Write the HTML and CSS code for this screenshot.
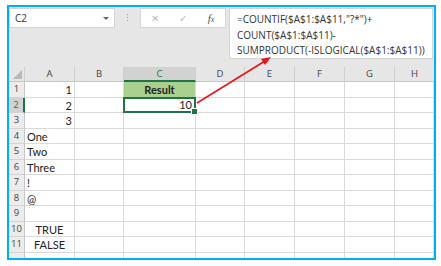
FILE: index.html
```html
<!DOCTYPE html>
<html>

<head>
    <title>Excel</title>
    <link rel="stylesheet" href="styles.css">
</head>

<body>
    <div class="frame">
        <div class="bar">
            <div class="namebox">C2<span class="drop"></span></div>
            <div class="dots"><i></i><i></i><i></i></div>
            <div class="buttons">
                <span class="btn">&#x2715;</span>
                <span class="btn">&#x2713;</span>
                <span class="btn fx">f<small>x</small></span>
            </div>
            <div class="formula">=COUNTIF($A$1:$A$11,"?*")+<br>COUNT($A$1:$A$11)-<br>SUMPRODUCT(-ISLOGICAL($A$1:$A$11))</div>
        </div>

        <div class="sheet">
            <div class="hd corner"><span class="tri"></span></div>
            <div class="hd">A</div>
            <div class="hd">B</div>
            <div class="hd sel">C</div>
            <div class="hd">D</div>
            <div class="hd">E</div>
            <div class="hd">F</div>
            <div class="hd">G</div>
            <div class="hd last">H</div>

            <div class="rn">1</div>
            <div class="c num">1</div><div class="c"></div><div class="c result">Result</div><div class="c"></div><div class="c"></div><div class="c"></div><div class="c"></div><div class="c"></div>

            <div class="rn sel">2</div>
            <div class="c num">2</div><div class="c"></div><div class="c num active">10<span class="handle"></span></div><div class="c"></div><div class="c"></div><div class="c"></div><div class="c"></div><div class="c"></div>

            <div class="rn">3</div>
            <div class="c num">3</div><div class="c"></div><div class="c"></div><div class="c"></div><div class="c"></div><div class="c"></div><div class="c"></div><div class="c"></div>

            <div class="rn">4</div>
            <div class="c">One</div><div class="c"></div><div class="c"></div><div class="c"></div><div class="c"></div><div class="c"></div><div class="c"></div><div class="c"></div>

            <div class="rn">5</div>
            <div class="c">Two</div><div class="c"></div><div class="c"></div><div class="c"></div><div class="c"></div><div class="c"></div><div class="c"></div><div class="c"></div>

            <div class="rn">6</div>
            <div class="c">Three</div><div class="c"></div><div class="c"></div><div class="c"></div><div class="c"></div><div class="c"></div><div class="c"></div><div class="c"></div>

            <div class="rn">7</div>
            <div class="c">!</div><div class="c"></div><div class="c"></div><div class="c"></div><div class="c"></div><div class="c"></div><div class="c"></div><div class="c"></div>

            <div class="rn">8</div>
            <div class="c">@</div><div class="c"></div><div class="c"></div><div class="c"></div><div class="c"></div><div class="c"></div><div class="c"></div><div class="c"></div>

            <div class="rn">9</div>
            <div class="c"></div><div class="c"></div><div class="c"></div><div class="c"></div><div class="c"></div><div class="c"></div><div class="c"></div><div class="c"></div>

            <div class="rn">10</div>
            <div class="c bool">TRUE</div><div class="c"></div><div class="c"></div><div class="c"></div><div class="c"></div><div class="c"></div><div class="c"></div><div class="c"></div>

            <div class="rn">11</div>
            <div class="c bool">FALSE</div><div class="c"></div><div class="c"></div><div class="c"></div><div class="c"></div><div class="c"></div><div class="c"></div><div class="c"></div>

            <div class="rn"></div>
            <div class="c"></div><div class="c"></div><div class="c"></div><div class="c"></div><div class="c"></div><div class="c"></div><div class="c"></div><div class="c"></div>
        </div>

        <!-- red pointer from the cell to the formula -->
        <svg class="arrow" width="425" height="251" viewBox="0 0 425 251">
            <line x1="188" y1="96" x2="256" y2="54" stroke="#e8141c" stroke-width="1.6"/>
            <polygon points="262,50 252,52 256,58" fill="#e8141c"/>
        </svg>
    </div>
</body>

</html>
```

FILE: styles.css
```css
body {
    margin: 0;
    background: #fff;
}

.frame {
    position: relative;
    width: 425px;
    height: 251px;
    margin: 5px 0 0 7px;
    border: 2px solid #00b0f0;
    overflow: hidden;
    background: #fff;
}

.bar {
    display: flex;
    align-items: flex-start;
    height: 60px;
    padding-top: 1px;
    box-sizing: border-box;
    background: #e6e6e6;
    font-family: "Open Sans", "Noto Sans", sans-serif;
}

.namebox {
    position: relative;
    width: 106px;
    height: 20px;
    box-sizing: border-box;
    border: 1px solid #d4d4d4;
    background: #fff;
    padding-left: 5px;
    font-size: 10px;
    line-height: 18px;
    color: #333;
}

.namebox .drop {
    position: absolute;
    right: 5px;
    top: 8px;
    border-left: 3px solid transparent;
    border-right: 3px solid transparent;
    border-top: 3px solid #666;
}

.dots {
    display: flex;
    flex-direction: column;
    gap: 2px;
    width: 25px;
    padding-top: 6px;
    align-items: center;
}

.dots i {
    width: 1px;
    height: 1px;
    background: #999;
}

.buttons {
    display: flex;
    width: 86px;
    height: 20px;
    box-sizing: border-box;
    border: 1px solid #d4d4d4;
    background: #fff;
}

.btn {
    flex: 1;
    text-align: center;
    font-size: 10px;
    line-height: 18px;
    color: #bbb;
}

.btn.fx {
    font-family: "Liberation Serif", serif;
    font-style: italic;
    font-size: 11px;
    color: #555;
}

.btn.fx small {
    font-size: 8px;
}

.formula {
    width: 204px;
    height: 51px;
    margin-left: 3px;
    box-sizing: border-box;
    border: 1px solid #d4d4d4;
    background: #fff;
    padding: 3px 0 0 7px;
    font-size: 10px;
    line-height: 15.5px;
    color: #333;
    white-space: nowrap;
}

.sheet {
    display: grid;
    grid-template-columns: 16px 50px 49px 72px 49px 50px 50px 50px 1fr;
    grid-template-rows: 15px;
    grid-auto-rows: 15.56px;
    font-family: Lato, "Liberation Sans", sans-serif;
    font-size: 11px;
    color: #222;
}

.sheet > div {
    box-sizing: border-box;
    border-right: 1px solid #dadada;
    border-bottom: 1px solid #dadada;
    white-space: nowrap;
    overflow: visible;
}

.hd {
    background: #e6e6e6;
    border-bottom: 1px solid #c6c6c6 !important;
    border-right-color: #cfcfcf !important;
    text-align: center;
    font-family: "Open Sans", "Noto Sans", sans-serif;
    font-size: 9.5px;
    line-height: 14px;
    color: #444;
}

.hd.last {
    border-right: none !important;
}

.hd.sel {
    background: #d2d2d2;
    color: #217346;
    border-bottom: 2px solid #217346 !important;
}

.corner {
    position: relative;
}

.corner .tri {
    position: absolute;
    right: 2px;
    bottom: 2px;
    border-left: 9px solid transparent;
    border-bottom: 9px solid #b8b8b8;
}

.rn {
    background: #ececec;
    border-right-color: #c6c6c6 !important;
    border-bottom-color: #d4d4d4 !important;
    text-align: center;
    font-family: "Open Sans", "Noto Sans", sans-serif;
    font-size: 9.5px;
    line-height: 14px;
    color: #444;
}

.rn.sel {
    background: #d2d2d2;
    color: #217346;
    border-right: 2px solid #217346 !important;
}

.c {
    padding: 0 2px;
    line-height: 15px;
}

.c.num {
    text-align: right;
}

.c.bool {
    text-align: center;
}

.c.result {
    background: #a9d08e;
    text-align: center;
    font-weight: bold;
}

.c.active {
    position: relative;
    border: 2px solid #217346 !important;
    margin: -1px 0 0 -1px;
    line-height: 12px;
}

.handle {
    position: absolute;
    right: -4px;
    bottom: -4px;
    width: 5px;
    height: 5px;
    background: #217346;
    border: 1px solid #fff;
}

.arrow {
    position: absolute;
    left: 0;
    top: 0;
    pointer-events: none;
}
```
